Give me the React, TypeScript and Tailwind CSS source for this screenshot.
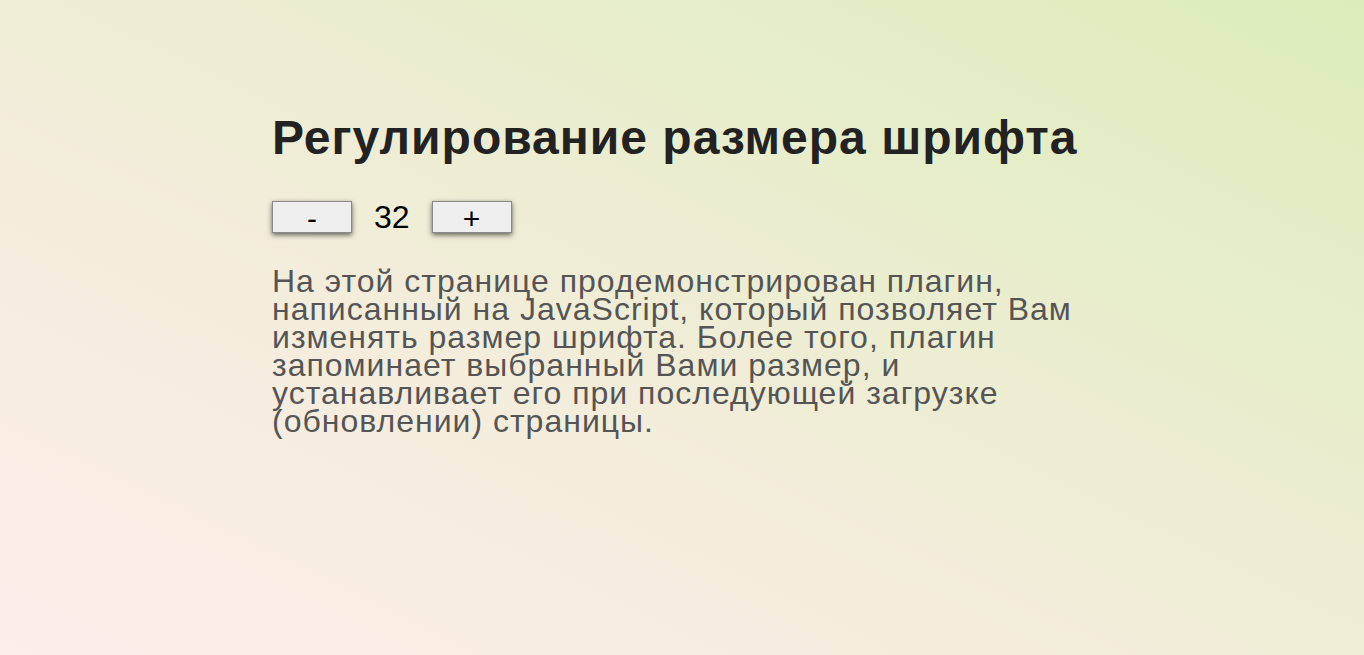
export default function App() {
  return (
    <div
      className="min-h-[655px] w-full bg-[linear-gradient(to_top_right,#fdedeb,#f3eddb_40%,#dcedbb)]"
      style={{ fontFamily: '"Liberation Sans", Arial, sans-serif' }}
    >
      <div className="mx-auto w-[820px] pt-[110px]">
        <h1 className="text-[48px] font-bold leading-[55px] tracking-[1px] text-[#222]">
          Регулирование размера шрифта
        </h1>
        <div className="mt-[36px] flex items-center gap-[22px]">
          <button className="h-[32px] w-[80px] border border-[#8a8a8a] bg-[#efefef] pt-[2px] text-[30px] leading-none text-black shadow-[0_2px_5px_rgba(0,0,0,0.6)]">
            -
          </button>
          <span className="text-[32px] leading-none text-black">32</span>
          <button className="h-[32px] w-[80px] border border-[#8a8a8a] bg-[#efefef] pt-[2px] text-[30px] leading-none text-black shadow-[0_2px_5px_rgba(0,0,0,0.6)]">
            +
          </button>
        </div>
        <p className="mt-[34px] text-[32px] leading-[28px] tracking-[1px] text-[#555]">
          На этой странице продемонстрирован плагин, написанный на JavaScript,
          который позволяет Вам изменять размер шрифта. Более того, плагин
          запоминает выбранный Вами размер, и устанавливает его при последующей
          загрузке (обновлении) страницы.
        </p>
      </div>
    </div>
  );
}
